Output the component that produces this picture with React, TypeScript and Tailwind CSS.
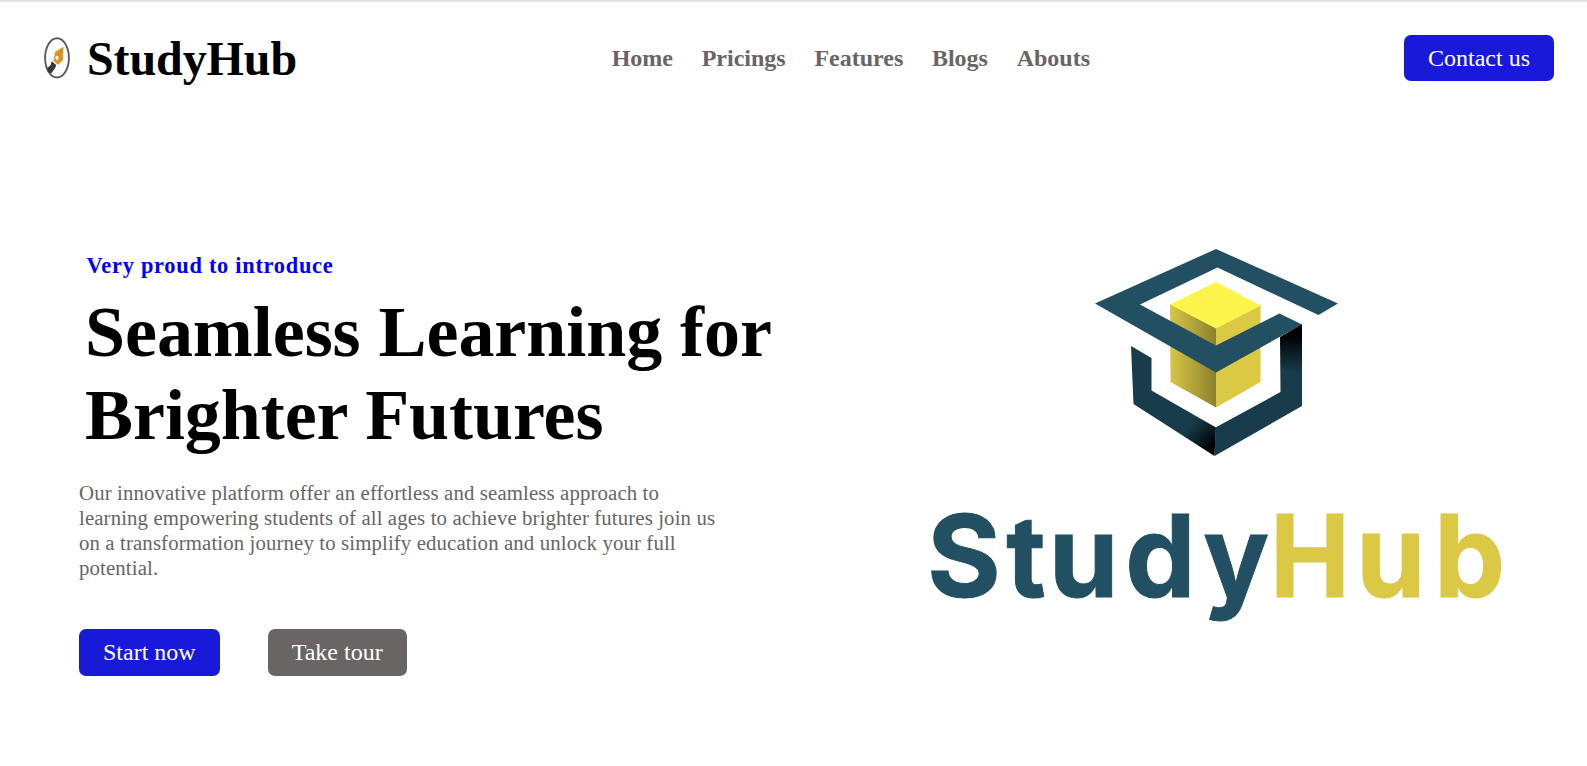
const links = ['Home', 'Pricings', 'Features', 'Blogs', 'Abouts'];

const navy = '#225062';
const gold = '#dbc945';

const wordmark = [
  { char: 'S', x: 927, scale: 0.985, color: navy },
  { char: 't', x: 1006.2, scale: 0.94, color: navy },
  { char: 'u', x: 1048.8, scale: 0.98, color: navy },
  { char: 'd', x: 1125.2, scale: 0.975, color: navy },
  { char: 'y', x: 1203.2, scale: 0.955, color: navy },
  { char: 'H', x: 1270, scale: 0.935, color: gold },
  { char: 'u', x: 1356, scale: 0.975, color: gold },
  { char: 'b', x: 1434, scale: 0.985, color: gold },
];

function PenIcon() {
  return (
    <svg className="h-[44px] w-[28px]" viewBox="0 0 28 44" fill="none">
      <ellipse cx="14" cy="21.9" rx="11.9" ry="19.6" stroke="#5c5c60" strokeWidth="1.9" />
      <path d="M20.4 10.8 L12.2 15.8 L10.4 24.8 L15.2 28.9 L20 23.8 Z" fill="#dd971f" />
      <path d="M8.8 25.2 L13.2 29 L12.2 32 L8.2 37.6 L5 35.6 L4.2 32.2 L7.6 29 Z" fill="#38383c" />
      <path d="M14.4 20.8 L20 11.8" stroke="#b97a14" strokeWidth="0.6" />
      <ellipse cx="14" cy="21.8" rx="1.6" ry="2.1" fill="#fff" />
    </svg>
  );
}

function HeroLogo() {
  return (
    <svg className="h-[390px] w-[590px]" viewBox="920 240 590 390" role="img">
      <defs>
        <linearGradient id="side" x1="0" x2="1" y1="0" y2="0">
          <stop offset="0" stopColor="#d6c544" />
          <stop offset="0.45" stopColor="#b5a83a" />
          <stop offset="1" stopColor="#8b812c" />
        </linearGradient>
        <linearGradient id="arm" x1="0" x2="0" y1="326" y2="372" gradientUnits="userSpaceOnUse">
          <stop offset="0.2" stopColor="#000" />
          <stop offset="1" stopColor="#183c4b" />
        </linearGradient>
        <linearGradient id="base" x1="1186" x2="1212" y1="430" y2="455" gradientUnits="userSpaceOnUse">
          <stop offset="0" stopColor="#183c4b" />
          <stop offset="0.85" stopColor="#000" />
        </linearGradient>
        <clipPath id="slant">
          <path d="M1000 532 L1029.6 518 H1050 V610 H1000 Z" />
        </clipPath>
      </defs>
      <path d="M1131 346 L1151.5 358 V390.5 L1216 427.5 L1214.5 456 L1133.5 404 Z" fill="url(#base)" />
      <path d="M1280 337 L1302 324 V406 L1214.5 456 L1215.5 427.5 L1280.5 392 Z" fill="url(#arm)" />
      <path d="M1170 304 L1216 328 V407.5 L1170.5 382 Z" fill="url(#side)" />
      <path d="M1216 328 L1260.5 305.5 V382 L1216 407.5 Z" fill={gold} />
      <path d="M1170 304.5 L1216 282 L1260.5 305.5 L1216 328.5 Z" fill="#fdf54c" />
      <path
        d="M1095 303.5 L1216 249 L1338 303.5 L1318.5 315 L1217.5 267.5 L1140 304.5 L1216 345.5 L1279.5 313.5 L1302 324.5 L1216 372.5 Z"
        fill={navy}
      />
      {wordmark.map(({ char, x, scale, color }) => (
        <g key={x} clipPath={char === 't' ? 'url(#slant)' : undefined}>
          <text
            transform={`translate(${x} 597) scale(${scale} 1)`}
            fill={color}
            stroke={color}
            strokeWidth="1"
            className="font-['Inter',sans-serif] text-[114.5px] font-bold"
          >
            {char}
          </text>
        </g>
      ))}
    </svg>
  );
}

export default function App() {
  return (
    <div className="h-[766px] overflow-hidden border-t-2 border-[#e2e2e2] bg-white font-['Liberation_Serif',serif] text-black">
      <header className="flex h-[112px] items-center justify-between pr-[33px] pl-[43px]">
        <div className="flex w-[568.7px] items-center gap-[16px]">
          <PenIcon />
          <span className="text-[48px] leading-[55px] font-bold tracking-[-0.1px]">StudyHub</span>
        </div>
        <nav className="flex flex-1 gap-[28.7px] text-2xl leading-[27px] font-bold text-[#696565]">
          {links.map((link) => (
            <a key={link}>{link}</a>
          ))}
        </nav>
        <button className="h-[46px] rounded-[7px] bg-[#1919d9] px-6 text-2xl leading-[27px] text-white">Contact us</button>
      </header>
      <main className="flex justify-between pr-[77px] pl-[79px]">
        <section className="w-[720px] pt-[138px]">
          <p className="pl-[7.5px] text-[22.4px] leading-[28px] font-bold tracking-[0.72px] text-[#0000ff]">Very proud to introduce</p>
          <h1 className="mt-[11px] pl-[6px] text-[72px] leading-[83px] font-bold tracking-[-0.05px]">
            Seamless Learning for
            <br />
            Brighter Futures
          </h1>
          <p className="mt-[23px] w-[645px] text-[20.8px] leading-[25px] tracking-[0.125px] text-[#696565]">
            Our innovative platform offer an effortless and seamless approach to learning empowering students of all ages to
            achieve brighter futures join us on a transformation journey to simplify education and unlock your full potential.
          </p>
          <div className="mt-[49px] flex gap-12">
            <button className="h-[47px] rounded-[7px] bg-[#1919d9] px-6 text-2xl leading-[27px] text-white">Start now</button>
            <button className="h-[47px] rounded-[7px] bg-[#696565] px-6 text-2xl leading-[27px] text-white">Take tour</button>
          </div>
        </section>
        <div className="pt-[126px]">
          <HeroLogo />
        </div>
      </main>
    </div>
  );
}
